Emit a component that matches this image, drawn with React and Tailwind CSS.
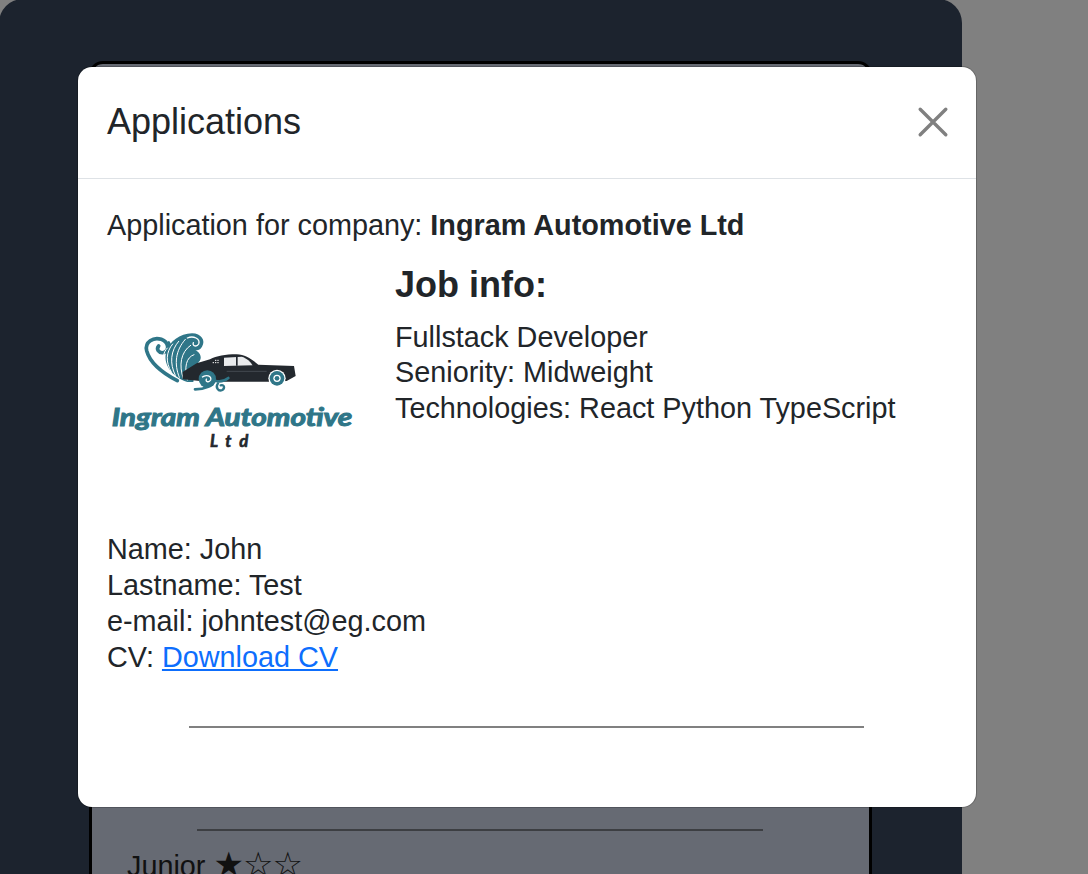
import React from "react";

function Logo() {
  const teal = "#2f7688";
  const dark = "#23282e";
  return (
    <svg viewBox="0 0 810 420" className="block h-[140px] w-[270px]">
      {/* left spiral and curl */}
      <g fill="none" stroke={teal} strokeLinecap="round">
        <path d="M232 182 C190 160 150 130 140 92 C134 66 160 50 184 58 C206 66 210 92 190 98 C176 100 168 88 176 78" strokeWidth="11" />
        <path d="M212 110 C214 92 212 78 206 68" strokeWidth="9" />
      </g>
      {/* main crest */}
      <path
        d="M262 186 C215 170 186 130 200 92 C208 66 240 40 276 40 C304 40 318 62 306 80 C300 90 292 92 286 90 C302 98 308 116 296 126 L285 150 L280 186 Z"
        fill={teal}
      />
      {/* white fan of stripes */}
      <g fill="none" stroke="#ffffff" strokeLinecap="round">
        <path d="M200 142 C186 118 188 98 202 84" strokeWidth="3" />
        <path d="M214 156 C196 126 198 96 218 72" strokeWidth="3" />
        <path d="M226 166 C208 130 212 92 236 64" strokeWidth="3" />
        <path d="M238 172 C222 132 226 92 256 58" strokeWidth="3" />
        <path d="M250 176 C236 136 242 96 272 76" strokeWidth="3" />
        <path d="M262 180 C252 142 258 112 282 104" strokeWidth="3" />
        <path d="M262 54 C280 46 302 56 296 72 C290 82 276 78 280 68" strokeWidth="4" />
      </g>
      {/* car */}
      <path
        d="M248 156 L290 130 L330 118 C350 108 375 103 410 103 C435 103 455 118 475 134 L582 138 L587 168 L560 183 L510 185 L350 185 L300 183 L248 178 Z"
        fill={dark}
      />
      <path d="M372 113 L425 110 C440 114 452 126 458 136 L372 138 Z" fill="#e8eaec" />
      <path d="M408 111 h5 v26 h-5 Z" fill={dark} />
      <path d="M345 121 h14 M338 128 h20" stroke="#ffffff" strokeWidth="3" strokeDasharray="4 3" />
      <path d="M380 154 H500" stroke="#555b62" strokeWidth="2" />
      <circle cx="531" cy="175" r="26" fill="#ffffff" />
      <circle cx="531" cy="175" r="22" fill={teal} />
      <circle cx="531" cy="175" r="11" fill="#ffffff" />
      <circle cx="531" cy="175" r="7" fill={teal} />
      <circle cx="322" cy="177" r="26" fill={teal} />
      <path d="M306 172 C318 162 336 168 332 180 C326 190 314 184 320 176" fill="none" stroke="#ffffff" strokeWidth="4" />
      <path d="M285 208 C310 208 335 200 345 182 M345 182 C360 187 375 182 385 174" fill="none" stroke={teal} strokeWidth="8" strokeLinecap="round" />
      <path d="M354 190 C345 202 355 216 367 210 C376 204 372 192 362 196" fill="none" stroke={teal} strokeWidth="7" strokeLinecap="round" />
      <text
        x="35"
        y="317"
        textLength="722"
        lengthAdjust="spacingAndGlyphs"
        fill={teal}
        stroke={teal}
        strokeWidth="3"
        fontFamily="Lato, sans-serif"
        fontWeight="700"
        fontStyle="italic"
        fontSize="72"
      >
        Ingram Automotive
      </text>
      <text
        x="330"
        y="382"
        textLength="115"
        fill={dark}
        stroke={dark}
        strokeWidth="2"
        fontFamily="Lato, sans-serif"
        fontWeight="700"
        fontStyle="italic"
        fontSize="50"
      >
        Ltd
      </text>
    </svg>
  );
}

export default function App() {
  return (
    <div className="relative h-[874px] w-[1088px] overflow-hidden bg-[#808080] font-['Liberation_Sans',Arial,sans-serif]">
      <div className="-mt-px -ml-px h-[900px] w-[963px] rounded-t-[24px] bg-[#1c232e] pt-[62px] pl-[90px]">
        <div className="h-[900px] w-[783px] rounded-t-[14px] border-[3px] border-black bg-[#666a73] px-[35px] pt-[765px] text-[28.8px] leading-[36px] text-[#111]">
          <div className="mx-auto h-[2px] w-[566px] -translate-x-px bg-[#3c3e42]" />
          <p className="mt-[15px]">
            Junior <span className="font-['DejaVu_Sans',sans-serif] text-[34px] leading-[36px] tracking-[-1px]">★☆☆</span>
          </p>
        </div>
      </div>

      <div className="absolute left-[78px] top-[67px] h-[740px] w-[898px] rounded-[14px] bg-white text-[#212529] ring-1 ring-black/20">
        <div className="flex h-[112px] items-center justify-between border-b border-[#dee2e6] pr-[28px] pl-[29px]">
          <h5 className="-translate-y-px text-[36px] leading-[44px] font-normal">Applications</h5>
          <svg viewBox="0 0 32 32" className="-translate-y-px translate-x-px" width="32" height="32" fill="none" stroke="#808080" strokeWidth="3.4" strokeLinecap="round">
            <path d="M3.2 3.2 L28.8 28.8 M28.8 3.2 L3.2 28.8" />
          </svg>
        </div>
        <div className="pt-[28px] pr-[28px] pl-[29px] text-[28.8px] leading-[36px]">
          <p>
            Application for company: <strong className="font-bold">Ingram Automotive Ltd</strong>
          </p>
          <div className="mt-[19px] flex">
            <div className="w-[288px] pt-[58px]">
              <div className="ml-[-7px]">
                <Logo />
              </div>
            </div>
            <div>
              <h4 className="text-[36px] leading-[46px] font-bold">Job info:</h4>
              <p className="mt-[11px]">Fullstack Developer</p>
              <p className="leading-[35px]">Seniority: Midweight</p>
              <p>Technologies: React Python TypeScript</p>
            </div>
          </div>
          <div className="mt-[71px]">
            <p>Name: John</p>
            <p>Lastname: Test</p>
            <p>e-mail: johntest@eg.com</p>
            <p>
              CV: <a href="#" className="text-[#0d6efd] underline">Download CV</a>
            </p>
          </div>
          <div className="mx-auto mt-[51px] h-[2px] w-[675px] -translate-x-px bg-[#808080]" />
        </div>
      </div>
    </div>
  );
}
